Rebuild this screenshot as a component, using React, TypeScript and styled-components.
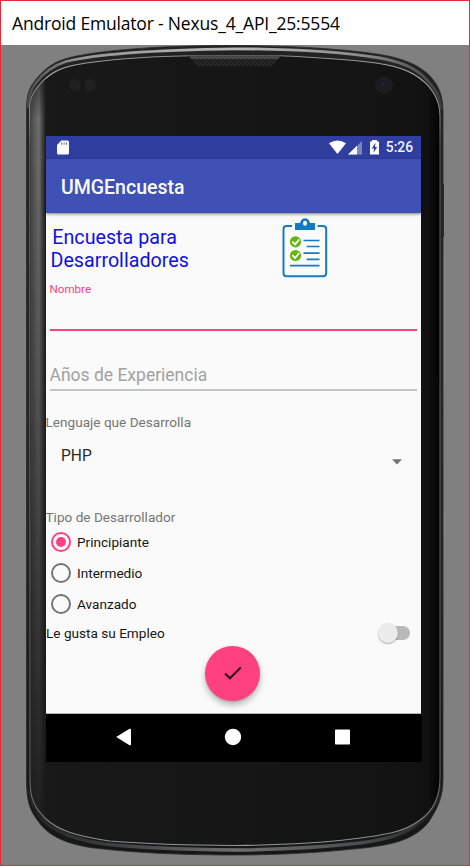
import React, { useState } from "react";
import styled, { createGlobalStyle } from "styled-components";

const GlobalStyle = createGlobalStyle`
  *, *::before, *::after { box-sizing: border-box; }
  body { margin: 0; background: #808080; }
  button { font: inherit; border: 0; padding: 0; background: none; }
`;

const Window = styled.div`
  width: 470px;
  height: 866px;
  display: flex;
  flex-direction: column;
  border: 1px solid #ed2939;
  background: #808080;
  overflow: hidden;
  font-family: Roboto, "Liberation Sans", sans-serif;
`;

const TitleBar = styled.header`
  height: 44px;
  flex: none;
  padding-left: 11px;
  background: #fff;
  color: #000;
  font: 17.5px/44px "Open Sans", "Noto Sans", sans-serif;
  letter-spacing: -0.18px;
  white-space: nowrap;
`;

const Phone = styled.main`
  position: relative;
  flex: 1;
  padding: 91px 0 0 45px;
`;

const Chassis = styled.svg`
  position: absolute;
  left: 0;
  top: 0;
`;

const Screen = styled.div`
  position: relative;
  width: 375px;
  background: #fafafa;
`;

const StatusBar = styled.div`
  height: 23px;
  display: flex;
  align-items: center;
  justify-content: space-between;
  padding: 0 8px 0 11px;
  background: #303f9f;
  color: #f2f3fa;
  svg { display: block; }
`;

const StatusIcons = styled.div`
  display: flex;
  align-items: center;
`;

const Clock = styled.span`
  margin-left: 6px;
  font-size: 13.8px;
  font-weight: 500;
  line-height: 23px;
`;

const AppBar = styled.div`
  position: relative;
  height: 54px;
  padding-left: 15px;
  background: #3f51b5;
  color: #fafbff;
  font-size: 19.5px;
  font-weight: 500;
  line-height: 57px;
  box-shadow: 0 1px 3px rgba(0, 0, 0, 0.5);
`;

const Form = styled.div`
  height: 501px;
  display: flex;
  flex-direction: column;
  border-bottom: 1px solid #b4b4b4;
`;

const Intro = styled.div`
  display: flex;
  height: 69px;
  padding: 5px 0 0 5px;
`;

const Heading = styled.h1`
  width: 138px;
  margin: 8px 93.5px 0 -0.5px;
  color: #1010e4;
  font-size: 19.7px;
  font-weight: 400;
  line-height: 23px;
  text-align: center;
  white-space: pre;
`;

const Field = styled.label<{ $active?: boolean }>`
  display: flex;
  flex-direction: column;
  justify-content: ${(p) => (p.$active ? "space-between" : "flex-end")};
  height: ${(p) => (p.$active ? 49 : 60)}px;
  margin: 0 4.5px 0 3.5px;
  border-bottom: 2px solid ${(p) => (p.$active ? "#ff4081" : "#c2c4c3")};
  color: ${(p) => (p.$active ? "#ff4081" : "#a1a1a1")};
  font-size: ${(p) => (p.$active ? 11.6 : 17.5)}px;
  line-height: ${(p) => (p.$active ? 15 : 27)}px;
`;

const Caption = styled.div<{ $top: number }>`
  height: 20px;
  margin: ${(p) => p.$top}px 0 0 -0.5px;
  color: #757575;
  font-size: 13.6px;
  line-height: 20px;
`;

const Spinner = styled.div`
  display: flex;
  align-items: center;
  justify-content: space-between;
  height: 47px;
  padding: 0 19px 0 15px;
  color: #2b2b2b;
  font-size: 15.6px;
  svg { margin-top: 13px; }
`;

const Radios = styled.div`
  display: flex;
  flex-direction: column;
  margin-top: -1px;
`;

const RadioRow = styled.button`
  height: 31.2px;
  display: flex;
  align-items: center;
  gap: 6px;
  padding-left: 5px;
  color: #161616;
  font-size: 13.6px;
`;

const RadioMark = styled.span<{ $on: boolean }>`
  width: 20px;
  height: 20px;
  display: grid;
  place-items: center;
  border: 2px solid ${(p) => (p.$on ? "#ff4081" : "#757575")};
  border-radius: 50%;
  &::after {
    content: "";
    width: 10px;
    height: 10px;
    border-radius: 50%;
    background: ${(p) => (p.$on ? "#ff4081" : "transparent")};
  }
`;

const SwitchRow = styled.div`
  height: 26px;
  display: flex;
  align-items: center;
  justify-content: space-between;
  padding-right: 11px;
  color: #161616;
  font-size: 13.6px;
`;

const Track = styled.button`
  width: 29px;
  height: 14px;
  display: flex;
  align-items: center;
  border-radius: 7px;
  background: #b9b9b9;
`;

const Thumb = styled.span`
  flex: none;
  width: 20px;
  height: 20px;
  margin-left: -3px;
  border-radius: 50%;
  background: #ececec;
  box-shadow: 0 1px 1.5px rgba(0, 0, 0, 0.32);
`;

const Fab = styled.button`
  width: 55px;
  height: 55px;
  flex: none;
  display: grid;
  place-items: center;
  margin: 0 0 0 159.4px;
  border-radius: 50%;
  background: #ff4081;
  box-shadow: 0 4px 6px rgba(0, 0, 0, 0.27), 0 1px 2px rgba(0, 0, 0, 0.12);
`;

const NavBar = styled.nav`
  width: 376px;
  height: 48px;
  background: #000;
  svg { display: block; }
`;

const levels = ["Principiante", "Intermedio", "Avanzado"];

const OUTER =
  "M26.500 112C26.500 98 28 91 32 85C37 77 46 67 58 61.500C72 55.500 100 51 150 47.700C180 46 205 45.500 235 45.500C290 45.500 345 49 380 54.500C405 58.500 420 66 430 76C438 85 443 94 443 112V778C443 797 438 808 428 823C415 838 397 844 368 847.500C325 852.500 280 855 235 855C175 855 125 852 90 847.500C62 843 47 834 38 821C29 809 26.500 800 26.500 778Z";
const INNER =
  "M29.500 112C29.500 98 33 92 40 84C50 73 60 68 75 65C110 58.500 150 56.500 190 55.800H280C320 57.500 355 59.500 385 64.500C410 69 425 80 433 92C438 100 440 106 440 116V778C440 797 433 811 420 820C405 832 385 835 352 839C320 843 280 845 235 845.500C180 845.300 140 843.500 110 841C75 836 58 830 46 819C35 808 30 800 30 780Z";
const TOP_BAND =
  "M28 108C28 97 30 91 35 84C43 73 53 65.500 66 61.500C95 54 150 50 235 48.800C290 49 345 52.500 380 58C404 62.500 417 69 427 80C436 90 440 96 441 110";
const BOTTOM_BAND =
  "M29 790C31 803 36 813 45 822C59 834 78 840 105 844C140 848 185 849.500 235 850C283 849.500 325 847 360 843C390 839 408 833 422 820C434 808 440 799 441 785";

function PhoneBody() {
  return (
    <Chassis width="468" height="820" viewBox="1 45 468 820">
      <defs>
        <linearGradient id="rim" x1="0" y1="45" x2="0" y2="856" gradientUnits="userSpaceOnUse">
          <stop offset="0" stopColor="#222" />
          <stop offset=".5" stopColor="#252627" />
          <stop offset="1" stopColor="#171717" />
        </linearGradient>
        <linearGradient id="band" x1="28" x2="441" y1="0" y2="0" gradientUnits="userSpaceOnUse">
          <stop offset="0" stopColor="#4a4a4a" />
          <stop offset=".12" stopColor="#949494" />
          <stop offset=".5" stopColor="#bababa" />
          <stop offset=".82" stopColor="#8a8a8a" />
          <stop offset="1" stopColor="#3c3c3c" />
        </linearGradient>
        <linearGradient id="lowerBand" x1="28" x2="441" y1="0" y2="0" gradientUnits="userSpaceOnUse">
          <stop offset="0" stopColor="#222" />
          <stop offset=".25" stopColor="#454647" />
          <stop offset=".5" stopColor="#6d6f70" />
          <stop offset=".8" stopColor="#4c4d4e" />
          <stop offset="1" stopColor="#222" />
        </linearGradient>
        <linearGradient id="edge" x1="0" y1="50" x2="0" y2="850" gradientUnits="userSpaceOnUse">
          <stop offset="0" stopColor="#777c80" />
          <stop offset=".03" stopColor="#b8b8b8" />
          <stop offset=".12" stopColor="#555" />
          <stop offset=".9" stopColor="#5b5b5b" />
          <stop offset="1" stopColor="#969899" />
        </linearGradient>
        <linearGradient id="face" x1="0" x2="1">
          <stop offset="0" stopColor="#191919" />
          <stop offset=".93" stopColor="#131313" />
          <stop offset=".97" stopColor="#111" />
          <stop offset="1" stopColor="#030303" />
        </linearGradient>
        <linearGradient id="shine" x1="30" x2="46" y1="0" y2="0" gradientUnits="userSpaceOnUse">
          <stop offset="0" stopColor="#444" />
          <stop offset=".55" stopColor="#707070" />
          <stop offset=".75" stopColor="#484848" />
          <stop offset="1" stopColor="#191919" />
        </linearGradient>
        <linearGradient id="fade" x1="0" y1="65" x2="0" y2="830" gradientUnits="userSpaceOnUse">
          <stop offset="0" stopColor="#333" />
          <stop offset=".07" stopColor="#fff" />
          <stop offset=".4" stopColor="#bbb" />
          <stop offset=".75" stopColor="#555" />
          <stop offset="1" stopColor="#111" />
        </linearGradient>
        <mask id="shineMask" maskUnits="userSpaceOnUse" x="26" y="50" width="25" height="800">
          <rect x="26" y="50" width="25" height="800" fill="url(#fade)" />
        </mask>
        <clipPath id="body"><path d={INNER} /></clipPath>
        <clipPath id="shell"><path d={OUTER} /></clipPath>
        <pattern id="mesh" width="4" height="4" patternUnits="userSpaceOnUse">
          <rect width="4" height="4" fill="#292929" />
          <circle cx="1" cy="1" r=".8" fill="#101010" />
          <circle cx="3" cy="3" r=".8" fill="#101010" />
        </pattern>
      </defs>
      <path d="M443 184h1v53h-1z" fill="#303030" />
      <path d={OUTER} fill="url(#rim)" stroke="#282828" strokeWidth=".8" />
      <g clipPath="url(#shell)" fill="none">
        <path d={TOP_BAND} stroke="url(#band)" strokeWidth="2.800" />
        <path d={BOTTOM_BAND} stroke="url(#lowerBand)" strokeWidth="3.500" />
      </g>
      <path d={INNER} fill="url(#face)" stroke="url(#edge)" strokeWidth="1.100" />
      <g clipPath="url(#body)">
        <rect x="30" y="50" width="16" height="800" fill="url(#shine)" mask="url(#shineMask)" />
      </g>
      <path d="M187 56H282C277 57 276 66 270 66H200C193 66 194 58 187 56Z" fill="url(#mesh)" />
      <path d="M188 55.500H281L278 59H191Z" fill="#44474a" />
      <circle cx="75" cy="85" r="6" fill="#202020" />
      <circle cx="90" cy="85" r="6" fill="#202020" />
      <circle cx="384" cy="85" r="9" fill="#1d1d1d" />
      <circle cx="384" cy="85" r="4" fill="#1c1c23" />
      <circle cx="383.500" cy="84.500" r="1.300" fill="#25234a" />
    </Chassis>
  );
}

function Clipboard() {
  return (
    <svg width="46" height="60" viewBox="282 218 46 60" fill="none">
      <path d="M292 226H286.500Q283.500 226 283.500 229V273Q283.500 276.200 286.500 276.200H323Q326.200 276.200 326.200 273V229Q326.200 226 323 226H317.500" stroke="#147bc0" strokeWidth="2" />
      <path fillRule="evenodd" d="M295 223H300C301 216.500 309 216.500 310 223H315V230H295ZM305 220.800A2 2.500 0 1 0 305.010 220.800Z" fill="#147bc0" />
      <path d="M303.500 240.500H319.500M306.700 246.500H319.500M303.500 253.200H319.500M306.700 259.400H319.500M290 265.700H319.500" stroke="#147bc0" strokeWidth="1.700" />
      <circle cx="295.500" cy="241.800" r="5.600" fill="#62b90b" />
      <circle cx="295.500" cy="255.500" r="5.600" fill="#62b90b" />
      <path d="M292.300 241.500L295 244.300L299.300 239.300M292.300 255.200L295 258L299.300 253" stroke="#fff" strokeWidth="1.800" />
    </svg>
  );
}

export default function App() {
  const [level, setLevel] = useState(0);
  return (
    <Window>
      <GlobalStyle />
      <TitleBar>Android Emulator - Nexus_4_API_25:5554</TitleBar>
      <Phone>
        <PhoneBody />
        <Screen>
          <StatusBar>
            <svg width="12" height="15" viewBox="0 0 12 15">
              <path d="M4.300 .5H10.500Q12 .5 12 2V13Q12 14.500 10.500 14.500H1.500Q0 14.500 0 13V5Z" fill="#fff" />
              <path d="M4.700 2.300v2.500M7.100 2.300v2.500M9.500 2.300v2.500" stroke="#303f9f" strokeWidth="1" opacity=".75" />
            </svg>
            <StatusIcons>
              <svg width="51" height="15" viewBox="329 140 51 15">
                <path d="M329 143.200Q337.500 137.600 346 143.200L337.500 154Z" fill="#fff" />
                <path d="M348 154.500L362 141V154.500Z" fill="#7c86c0" />
                <path d="M348 154.500L357 145.800V154.500Z" fill="#fff" />
                <path d="M370 141.500H372V140H377V141.500H379V154.500H370Z" fill="#fff" />
                <path d="M375.500 142.500L371.800 148.500H374L373.500 152.800L377.200 147H375Z" fill="#303f9f" />
              </svg>
              <Clock>5:26</Clock>
            </StatusIcons>
          </StatusBar>
          <AppBar>UMGEncuesta</AppBar>
          <Form>
            <Intro>
              <Heading>{"Encuesta para\u00a0\u00a0\nDesarrolladores"}</Heading>
              <Clipboard />
            </Intro>
            <Field $active>Nombre</Field>
            <Field>Años de Experiencia</Field>
            <Caption $top={21}>Lenguaje que Desarrolla</Caption>
            <Spinner>
              PHP
              <svg width="10" height="6" viewBox="0 0 10 6"><path d="M0 .3H10L5 5.500Z" fill="#727272" /></svg>
            </Spinner>
            <Caption $top={28}>Tipo de Desarrollador</Caption>
            <Radios>
              {levels.map((name, i) => (
                <RadioRow key={name} onClick={() => setLevel(i)}>
                  <RadioMark $on={level === i} />
                  {name}
                </RadioRow>
              ))}
            </Radios>
            <SwitchRow>
              Le gusta su Empleo
              <Track aria-label="Le gusta su Empleo"><Thumb /></Track>
            </SwitchRow>
            <Fab aria-label="Enviar">
              <svg width="18" height="14" viewBox="0 0 18 14"><path d="M1 7.500L6 12.300L16.700 1.500" fill="none" stroke="#291018" strokeWidth="2" /></svg>
            </Fab>
          </Form>
          <NavBar>
            <svg width="376" height="48" viewBox="46 714 376 48" fill="#fff">
              <path d="M116.200 737L129.500 728.800Q131 728.300 131 729.500V744.500Q131 745.700 129.500 745.200Z" />
              <circle cx="233" cy="737" r="8.200" />
              <rect x="335" y="729.500" width="15" height="15" rx=".7" />
            </svg>
          </NavBar>
        </Screen>
      </Phone>
    </Window>
  );
}
